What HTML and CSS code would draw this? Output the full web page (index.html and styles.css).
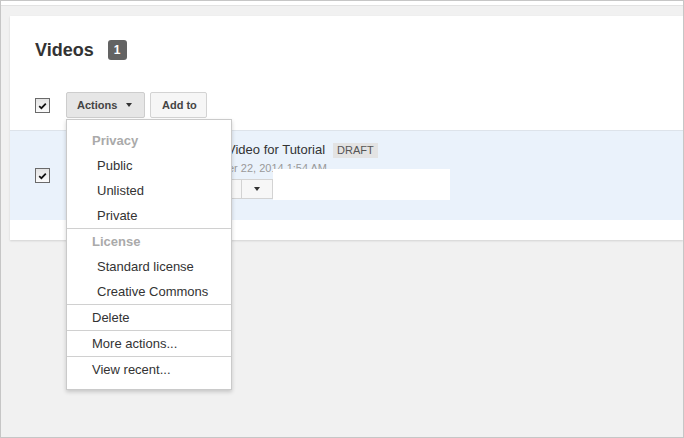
FILE: index.html
```html
<!DOCTYPE html>
<html>
<head>
<meta charset="utf-8">
<link rel="stylesheet" href="styles.css">
</head>
<body>
<div class="topbar"></div>
<div class="page">
  <div class="card">
    <div class="head">
      <h1 class="title">Videos</h1>
      <span class="count">1</span>
    </div>
    <div class="toolbar">
      <span class="cb"><svg width="9" height="8" viewBox="0 0 9 8"><path d="M1.2 4.2 L3.4 6.2 L7.8 1.6" fill="none" stroke="#111" stroke-width="1.7"/></svg></span>
      <button class="btn btn-actions">Actions <span class="caret"></span></button>
      <button class="btn btn-add">Add to</button>
    </div>
    <div class="row">
      <span class="cb"><svg width="9" height="8" viewBox="0 0 9 8"><path d="M1.2 4.2 L3.4 6.2 L7.8 1.6" fill="none" stroke="#111" stroke-width="1.7"/></svg></span>
      <div class="thumb"></div>
      <div class="info">
        <div class="vtitle"><span class="vname">Video for Tutorial</span><span class="draft">DRAFT</span></div>
        <div class="date">November 22, 2014 1:54 AM</div>
        <div class="group">
          <span class="gbtn gmain">Edit</span><span class="gbtn garrow"><span class="caret"></span></span>
        </div>
      </div>
      <div class="blank"></div>
    </div>
    <div class="menu">
      <div class="mgroup">
        <div class="mi hdr">Privacy</div>
        <div class="mi sub">Public</div>
        <div class="mi sub">Unlisted</div>
        <div class="mi sub">Private</div>
      </div>
      <div class="mgroup">
        <div class="mi hdr">License</div>
        <div class="mi sub">Standard license</div>
        <div class="mi sub">Creative Commons</div>
      </div>
      <div class="mgroup">
        <div class="mi">Delete</div>
      </div>
      <div class="mgroup">
        <div class="mi">More actions...</div>
      </div>
      <div class="mgroup">
        <div class="mi">View recent...</div>
      </div>
    </div>
  </div>
</div>
</body>
</html>
```
FILE: styles.css
```css
html, body { margin: 0; padding: 0; }
body {
  width: 684px;
  height: 438px;
  box-sizing: border-box;
  border: 1px solid #c6c6c6;
  background: #f1f1f1;
  font-family: "Liberation Sans", Arial, sans-serif;
  color: #333;
  overflow: hidden;
}
.topbar {
  height: 4px;
  background: #fff;
  border-bottom: 1px solid #e2e2e2;
}
.page {
  padding: 10px 0 0 9px;
}
.card {
  position: relative;
  background: #fff;
  height: 224px;
  box-shadow: 0 1px 2px rgba(0,0,0,0.13);
}
.head {
  display: flex;
  align-items: center;
  padding: 22px 0 0 25px;
  height: 24px;
}
.title {
  margin: 0;
  font-size: 18px;
  line-height: 24px;
  font-weight: bold;
  color: #333;
}
.count {
  margin-left: 14px;
  width: 19px;
  height: 20px;
  border-radius: 3px;
  background: #636363;
  color: #fff;
  font-size: 12px;
  font-weight: bold;
  display: flex;
  align-items: center;
  justify-content: center;
}
.toolbar {
  display: flex;
  align-items: center;
  margin-top: 30px;
  padding-left: 25px;
  height: 26px;
}
.cb {
  width: 15px;
  height: 15px;
  box-sizing: border-box;
  border: 1px solid #6a6a6a;
  background: linear-gradient(#e4e4e4, #fbfbfb);
  display: flex;
  align-items: center;
  justify-content: center;
  flex: none;
}
.cb svg { display: block; margin-top: 1px; }
.btn {
  height: 26px;
  box-sizing: border-box;
  border: 1px solid #d3d3d3;
  border-radius: 2px;
  font-family: inherit;
  font-size: 11px;
  font-weight: bold;
  color: #444;
  display: flex;
  align-items: center;
  margin: 0;
}
.btn-actions {
  margin-left: 16px;
  width: 79px;
  padding: 0 0 0 10px;
  background: #e6e6e6;
  border-color: #cdcdcd;
}
.btn-actions .caret { margin-left: 9px; }
.btn-add {
  margin-left: 5px;
  width: 57px;
  padding: 0 0 0 11px;
  background: #f6f6f6;
}
.caret {
  width: 0;
  height: 0;
  border-left: 3.5px solid transparent;
  border-right: 3.5px solid transparent;
  border-top: 4px solid #333;
  display: inline-block;
}
.row {
  position: relative;
  margin-top: 12px;
  height: 89px;
  border-top: 1px solid #dde3ea;
  background: #eaf2fb;
  display: flex;
  align-items: center;
  padding-left: 25px;
}
.thumb {
  width: 110px;
  height: 62px;
  margin-left: 16px;
  background: #222;
  flex: none;
}
.info {
  align-self: flex-start;
  margin-left: 11px;
  padding-top: 11px;
}
.vtitle {
  display: flex;
  align-items: center;
  height: 16px;
}
.vname {
  margin-left: 40px;
  font-size: 13px;
  line-height: 16px;
  color: #333;
}
.draft {
  margin-left: 8px;
  height: 15px;
  padding: 0 4px;
  background: #e3e3e3;
  color: #555;
  font-size: 11px;
  line-height: 15px;
}
.date {
  margin-top: 3px;
  font-size: 11px;
  line-height: 14px;
  color: #999;
}
.group {
  margin-top: 4px;
  display: flex;
}
.gbtn {
  height: 20px;
  box-sizing: border-box;
  border: 1px solid #d3d3d3;
  background: #f7f7f7;
  display: flex;
  align-items: center;
  justify-content: center;
  font-size: 11px;
  font-weight: bold;
  color: #444;
}
.gmain { width: 55px; }
.garrow { width: 31px; border-left: none; }
.blank {
  position: absolute;
  left: 263px;
  top: 38px;
  width: 177px;
  height: 31px;
  background: #fff;
}
.menu {
  position: absolute;
  left: 56px;
  top: 103px;
  width: 164px;
  border: 1px solid #cacaca;
  background: #fff;
  box-shadow: 0 2px 4px rgba(0,0,0,0.18);
  padding: 8px 0 7px;
}
.mgroup + .mgroup {
  border-top: 1px solid #d0d0d0;
}
.mi {
  font-size: 13px;
  line-height: 25px;
  height: 25px;
  padding-left: 25px;
  color: #333;
  white-space: nowrap;
}
.mi.sub { padding-left: 30px; }
.mi.hdr { font-weight: bold; color: #aaa; }
```
